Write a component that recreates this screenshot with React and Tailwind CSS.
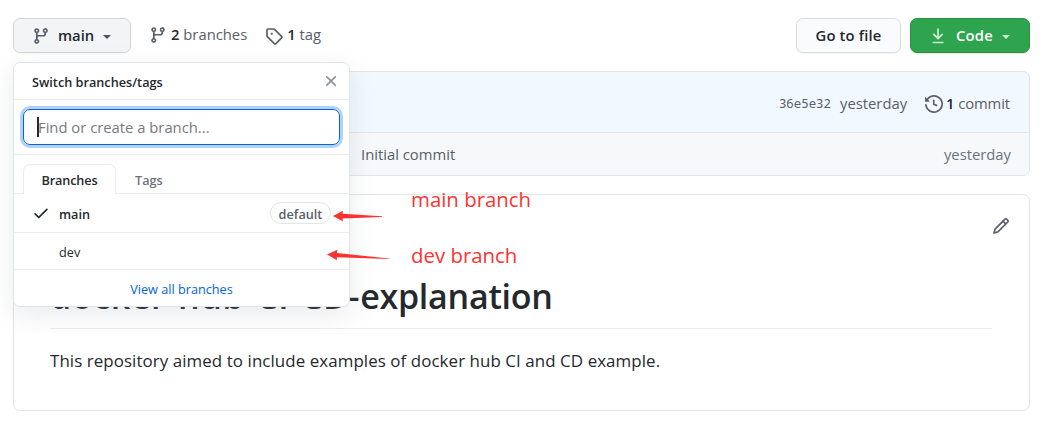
const PATHS = {
  branch:
    'M11.75 2.5a.75.75 0 100 1.5.75.75 0 000-1.5zm-2.25.75a2.25 2.25 0 113 2.122V6A2.5 2.5 0 0110 8.5H6a1 1 0 00-1 1v1.128a2.251 2.251 0 11-1.5 0V5.372a2.25 2.25 0 111.5 0v1.836A2.492 2.492 0 016 7h4a1 1 0 001-1v-.628A2.25 2.25 0 019.5 3.25zM4.25 12a.75.75 0 100 1.5.75.75 0 000-1.5zM3.5 3.25a.75.75 0 111.5 0 .75.75 0 01-1.5 0z',
  tag: 'M2.5 7.775V2.75a.25.25 0 01.25-.25h5.025a.25.25 0 01.177.073l6.25 6.25a.25.25 0 010 .354l-5.025 5.025a.25.25 0 01-.354 0l-6.25-6.25a.25.25 0 01-.073-.177zm-1.5 0V2.75C1 1.784 1.784 1 2.75 1h5.025c.464 0 .91.184 1.238.513l6.25 6.25a1.75 1.75 0 010 2.474l-5.026 5.026a1.75 1.75 0 01-2.474 0l-6.25-6.25A1.75 1.75 0 011 7.775zM6 5a1 1 0 100 2 1 1 0 000-2z',
  history:
    'M1.643 3.143L.427 1.927A.25.25 0 000 2.104V5.75c0 .138.112.25.25.25h3.646a.25.25 0 00.177-.427L2.715 4.215a6.5 6.5 0 11-1.18 4.458.75.75 0 10-1.493.154 8.001 8.001 0 101.6-5.684zM7.75 4a.75.75 0 01.75.75v2.992l2.028.812a.75.75 0 01-.557 1.392l-2.5-1A.75.75 0 017 8.25v-3.5A.75.75 0 017.75 4z',
  pencil:
    'M11.013 1.427a1.75 1.75 0 012.474 0l1.086 1.086a1.75 1.75 0 010 2.474l-8.61 8.61c-.21.21-.47.364-.756.445l-3.251.93a.75.75 0 01-.927-.928l.929-3.25a1.75 1.75 0 01.445-.758l8.61-8.61zm1.414 1.06a.25.25 0 00-.354 0L10.811 3.75l1.439 1.44 1.263-1.263a.25.25 0 000-.354l-1.086-1.086zM11.189 6.25L9.75 4.81l-6.286 6.287a.25.25 0 00-.064.108l-.558 1.953 1.953-.558a.249.249 0 00.108-.064l6.286-6.286z',
  download:
    'M7.47 10.78a.75.75 0 001.06 0l3.75-3.75a.75.75 0 00-1.06-1.06L8.75 8.44V1.75a.75.75 0 00-1.5 0v6.69L4.78 5.97a.75.75 0 00-1.06 1.06l3.75 3.75zM3.75 13a.75.75 0 000 1.5h8.5a.75.75 0 000-1.5h-8.5z',
  check:
    'M13.78 4.22a.75.75 0 010 1.06l-7.25 7.25a.75.75 0 01-1.06 0L2.22 9.28a.75.75 0 011.06-1.06L6 10.94l6.72-6.72a.75.75 0 011.06 0z',
  x: 'M3.72 3.72a.75.75 0 011.06 0L8 6.94l3.22-3.22a.75.75 0 111.06 1.06L9.06 8l3.22 3.22a.75.75 0 11-1.06 1.06L8 9.06l-3.22 3.22a.75.75 0 01-1.06-1.06L6.94 8 3.72 4.78a.75.75 0 010-1.06z',
};

function Icon({ name, className = '' }) {
  return (
    <svg viewBox="0 0 16 16" fill="currentColor" fillRule="evenodd" className={`size-[18px] shrink-0 ${className}`}>
      <path d={PATHS[name]} />
    </svg>
  );
}

function Caret({ className = '' }) {
  return <span className={`border-x-[4.5px] border-t-[4.5px] border-x-transparent ${className}`} />;
}

function Toolbar() {
  return (
    <div className="flex h-[35px] items-center text-[14.8px]">
      <button className="flex h-[35px] w-[118px] items-center rounded-[7px] border border-[#d3d5d8] bg-[#f3f4f6] pl-[18px] font-semibold shadow-[0_1px_0_rgba(27,31,35,0.04)]">
        <Icon name="branch" className="text-[#57606a]" />
        <span className="ml-[8px]">main</span>
        <Caret className="ml-[9px] mt-[2px] border-t-[#4c5258]" />
      </button>
      <div className="ml-[18px] flex items-center pb-[2px] text-[#586069]">
        <Icon name="branch" />
        <span className="ml-[4px]">
          <b className="font-semibold text-[#24292e]">2</b> branches
        </span>
        <Icon name="tag" className="ml-[18px] mt-[2px]" />
        <span className="ml-[4px]">
          <b className="font-semibold text-[#24292e]">1</b> tag
        </span>
      </div>
      <button className="ml-auto flex h-[35px] w-[105px] items-center justify-center rounded-[7px] border border-[#d9dbdd] bg-[#fafbfc] font-semibold tracking-[0.15px] shadow-[0_1px_0_rgba(27,31,35,0.04)]">
        Go to file
      </button>
      <button className="ml-[9px] flex h-[35px] w-[120px] items-center rounded-[7px] border border-[#2a9147] bg-[#2ea44f] pl-[18px] font-semibold text-white shadow-[0_1px_0_rgba(27,31,35,0.1)]">
        <Icon name="download" className="text-[#d0ecd8]" />
        <span className="ml-[9px] tracking-[0.2px]">Code</span>
        <Caret className="ml-[9px] mt-[2px] border-t-[#d0ecd8]" />
      </button>
    </div>
  );
}

function CommitBox() {
  return (
    <div className="mt-[18px] h-[105px] overflow-hidden rounded-[7px] border border-[#e1e4e8] text-[14.8px] text-[#586069]">
      <div className="-mx-px -mt-px flex h-[62px] items-center justify-end rounded-t-[7px] border border-[#c8e1ff] border-b-[#dfe5ee] bg-[#f1f8ff] pr-[19px] pt-[3px]">
        <span className="pt-[2px] font-['Noto_Sans_Mono','DejaVu_Sans_Mono',monospace] text-[12.4px]">36e5e32</span>
        <span className="ml-[9px]">yesterday</span>
        <Icon name="history" className="ml-[18px] mt-px" />
        <span className="ml-[3px] tracking-[-0.1px]">
          <b className="font-semibold text-[#24292e]">1</b> commit
        </span>
      </div>
      <div className="flex h-[42px] items-center bg-[#f6f8fa] pr-[18px] pl-[347px]">
        <span>Initial commit</span>
        <span className="ml-auto text-[#6a737d]">yesterday</span>
      </div>
    </div>
  );
}

function Readme() {
  return (
    <div className="mt-[18px] h-[217px] rounded-[7px] border border-[#e1e4e8] pr-[37px] pl-[36px]">
      <div className="-mr-[18px] flex h-[62px] items-center justify-end">
        <Icon name="pencil" className="text-[#586069]" />
      </div>
      <div className="h-[72px] border-b border-[#eaecef]">
        <h1 className="pt-[15px] text-[34px] leading-[48px] font-semibold tracking-[0.65px] whitespace-nowrap">
          docker-hub-CI-CD-<span className="tracking-[-0.25px]">explanation</span>
        </h1>
      </div>
      <p className="mt-[18px] text-[16.9px] leading-[27px] tracking-[0.08px] whitespace-nowrap">
        This repository aimed to include examples of docker hub CI and CD example.
      </p>
    </div>
  );
}

function BranchMenu() {
  return (
    <div className="absolute top-[62px] left-[13px] h-[245px] w-[337px] rounded-[7px] border border-[#e1e4e8] bg-white text-[12.7px] shadow-[0_8px_24px_rgba(149,157,165,0.2)]">
      <div className="flex h-[37px] items-center justify-between border-b border-[#eaecef] pr-[9px] pl-[18px]">
        <span className="pt-[3px] font-semibold">Switch branches/tags</span>
        <Icon name="x" className="text-[#8b949e]" />
      </div>
      <div className="flex h-[55px] items-center border-b border-[#eaecef] px-[9px]">
        <div className="flex h-[36px] w-full items-center rounded-[7px] border border-[#0366d6] pl-[13px] text-[14.8px] text-[#747b83] shadow-[0_0_0_3px_rgba(3,102,214,0.3)]">
          <span className="h-[20px] w-[2px] bg-[#24292e]" />
          <span className="-ml-px">Find or create a branch...</span>
        </div>
      </div>
      <div className="flex h-[39px] items-end border-b border-[#eaecef] pl-[9px] font-semibold">
        <span className="-mb-px flex h-[30px] w-[93px] items-center justify-center rounded-t-[7px] border border-b-0 border-[#eaecef] bg-white pt-[3px] tracking-[-0.15px]">
          Branches
        </span>
        <span className="flex h-[29px] items-center pt-[4px] pl-[19px] text-[#6a737d]">Tags</span>
      </div>
      <div className="flex h-[39px] items-center border-b border-[#eaecef] pr-[18px] pl-[18px]">
        <Icon name="check" />
        <span className="ml-[9px] pt-[4px] font-semibold">main</span>
        <span className="ml-auto flex h-[22px] w-[61px] items-center justify-center rounded-full border border-[#e1e4e8] pt-[3px] font-semibold text-[#586069]">
          default
        </span>
      </div>
      <div className="flex h-[37px] items-center border-b border-[#eaecef] pt-[3px] pl-[45px]">dev</div>
      <div className="flex h-[36px] items-center justify-center pt-[4px] text-[#0366d6]">View all branches</div>
    </div>
  );
}

function Annotations() {
  return (
    <>
      <svg className="absolute top-[205px] left-[320px] h-[60px] w-[80px]" viewBox="0 0 80 60" fill="#fb3432">
        <path d="M13 11 23 5.800 22.500 8.800 62 11.200 62 12 22.500 13.400 23 16.500Z" />
        <path d="M7 49.500 17.500 44.800 16.800 48 69 53.500 69 54 16.800 52.300 17 55.300Z" />
      </svg>
      <span className="absolute top-[185px] left-[411px] text-[20.4px] leading-[28px] whitespace-nowrap text-[#fb3432]">
        main branch
      </span>
      <span className="absolute top-[241px] left-[411px] text-[20.4px] leading-[28px] whitespace-nowrap text-[#fb3432]">
        dev branch
      </span>
    </>
  );
}

export default function App() {
  return (
    <div className="relative h-[433px] w-full overflow-hidden bg-white pt-[18px] pr-[33px] pl-[13px] font-['Open_Sans','Noto_Sans',sans-serif] text-[#24292e]">
      <Toolbar />
      <CommitBox />
      <Readme />
      <BranchMenu />
      <Annotations />
    </div>
  );
}
